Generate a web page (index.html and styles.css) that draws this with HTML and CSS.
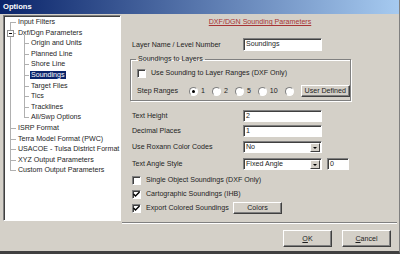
FILE: index.html
```html
<!DOCTYPE html>
<html lang="en">
<head>
    <meta charset="UTF-8">
    <title>Options</title>
    <link rel="stylesheet" href="styles.css">
</head>
<body>
<div class="window">
    <div class="titlebar">Options</div>
    <div class="main">
        <div class="tree">
            <ul class="nodes">
                <li>Input Filters</li>
                <li><span class="toggle"></span>Dxf/Dgn Parameters
                    <ul class="sub">
                        <li>Origin and Units</li>
                        <li>Planned Line</li>
                        <li>Shore Line</li>
                        <li><span class="selected">Soundings</span></li>
                        <li>Target Files</li>
                        <li>Tics</li>
                        <li>Tracklines</li>
                        <li>All/Swp Options</li>
                    </ul>
                </li>
                <li>ISRP Format</li>
                <li>Terra Model Format (PWC)</li>
                <li>USACOE - Tulsa District Format</li>
                <li>XYZ Output Parameters</li>
                <li>Custom Output Parameters</li>
            </ul>
        </div>

        <div class="panel">
            <div class="heading">DXF/DGN Sounding Parameters</div>

            <div class="field layer-row">
                <label>Layer Name / Level Number</label>
                <div class="textbox">Soundings</div>
            </div>

            <fieldset class="group">
                <legend>Soundings to Layers</legend>
                <div class="check-row first">
                    <span class="check"></span>
                    <span>Use Sounding to Layer Ranges (DXF Only)</span>
                </div>
                <div class="step-row">
                    <span class="step-label">Step Ranges</span>
                    <span class="radio on"></span><span class="opt">1</span>
                    <span class="radio"></span><span class="opt">2</span>
                    <span class="radio"></span><span class="opt">5</span>
                    <span class="radio"></span><span class="opt">10</span>
                    <span class="radio"></span>
                    <button class="btn small">User Defined</button>
                </div>
            </fieldset>

            <div class="field height-row">
                <label>Text Height</label>
                <div class="textbox">2</div>
            </div>
            <div class="field decimal-row">
                <label>Decimal Places</label>
                <div class="textbox">1</div>
            </div>
            <div class="field roxann-row">
                <label>Use Roxann Color Codes</label>
                <div class="combo"><span>No</span><span class="drop"></span></div>
            </div>
            <div class="field angle-row">
                <label>Text Angle Style</label>
                <div class="combo"><span>Fixed Angle</span><span class="drop"></span></div>
                <div class="textbox angle">0</div>
            </div>

            <div class="check-row single">
                <span class="check"></span>
                <span>Single Object Soundings (DXF Only)</span>
            </div>
            <div class="check-row">
                <span class="check">
                    <svg width="7" height="7" viewBox="0 0 7 7"><path d="M0.5 3 L2.5 5 L6.5 1" fill="none" stroke="#000" stroke-width="1.4"/></svg>
                </span>
                <span>Cartographic Soundings (IHB)</span>
            </div>
            <div class="check-row">
                <span class="check">
                    <svg width="7" height="7" viewBox="0 0 7 7"><path d="M0.5 3 L2.5 5 L6.5 1" fill="none" stroke="#000" stroke-width="1.4"/></svg>
                </span>
                <span class="export-label">Export Colored Soundings</span>
                <button class="btn small colors">Colors</button>
            </div>
        </div>
    </div>

    <div class="footer">
        <div class="separator"></div>
        <div class="buttons">
            <button class="btn"><u>O</u>K</button>
            <button class="btn"><u>C</u>ancel</button>
        </div>
    </div>
</div>
</body>
</html>
```

FILE: styles.css
```css
body {
    margin: 0;
    padding: 0;
    font-family: "Liberation Sans", Arial, sans-serif;
    font-size: 7.1px;
    color: #1e1e1e;
}

.window {
    width: 400px;
    height: 254px;
    box-sizing: border-box;
    background-color: #d4d0c8;
    border-right: 1px solid #808080;
    border-bottom: 3px solid #404040;
    display: flex;
    flex-direction: column;
}

.titlebar {
    height: 14px;
    line-height: 14px;
    padding-left: 3px;
    color: #fff;
    font-weight: bold;
    font-size: 7.6px;
    background: linear-gradient(to right, #0a246a, #a6caf0);
}

.main {
    display: flex;
    height: 208px;
}

/* tree on the left */
.tree {
    width: 118px;
    height: 206px;
    margin: 1px 0 0 3px;
    box-sizing: border-box;
    padding: 1px 0 0 1px;
    background-color: #fff;
    border: 1px solid;
    border-color: #808080 #fff #fff #808080;
    box-shadow: inset 1px 1px #404040;
}

.nodes, .sub {
    list-style: none;
    margin: 0;
    padding: 0;
    position: relative;
}

.nodes::before {
    content: '';
    position: absolute;
    left: 5px;
    top: 5px;
    bottom: 5px;
    border-left: 1px solid #b0b0b0;
}

.nodes li {
    position: relative;
    line-height: 10.6px;
    white-space: nowrap;
}

.nodes > li {
    padding-left: 13px;
}

.nodes > li::before {
    content: '';
    position: absolute;
    left: 5px;
    top: 5px;
    width: 6px;
    border-top: 1px solid #b0b0b0;
}

.sub {
    margin-left: -13px;
}

.sub::before {
    content: '';
    position: absolute;
    left: 19px;
    top: -3px;
    bottom: 5px;
    border-left: 1px solid #b0b0b0;
}

.sub li {
    padding-left: 26px;
}

.sub li::before {
    content: '';
    position: absolute;
    left: 19px;
    top: 5px;
    width: 5px;
    border-top: 1px solid #b0b0b0;
}

.toggle {
    position: absolute;
    left: 2px;
    top: 2px;
    width: 5px;
    height: 5px;
    border: 1px solid #909090;
    background-color: #fff;
    z-index: 1;
}

.toggle::after {
    content: '';
    position: absolute;
    left: 1px;
    top: 2px;
    width: 3px;
    border-top: 1px solid #000;
}

.selected {
    background-color: #0a246a;
    color: #fff;
    padding: 0 1px;
    margin-left: -1px;
}

/* right side */
.panel {
    flex: 1;
    padding-left: 11px;
    padding-right: 3px;
}

.heading {
    margin-top: 3px;
    line-height: 10px;
    text-align: center;
    color: #a83434;
    text-decoration: underline;
    padding-right: 8px;
}

.field {
    display: flex;
    align-items: center;
    height: 12px;
}

.field label {
    width: 111px;
}

.layer-row {
    margin-top: 11px;
    height: 13px;
}

.height-row {
    margin-top: 9px;
}

.decimal-row {
    margin-top: 3px;
}

.roxann-row {
    margin-top: 4px;
}

.angle-row {
    margin-top: 5px;
}

.textbox, .combo {
    width: 79px;
    height: 100%;
    box-sizing: border-box;
    background-color: #fff;
    border: 1px solid;
    border-color: #808080 #fff #fff #808080;
    box-shadow: inset 1px 1px #404040;
    padding-left: 2px;
    line-height: 11px;
}

.textbox.angle {
    width: 22px;
    margin-left: 5px;
}

.combo {
    display: flex;
    justify-content: space-between;
    padding: 1px 1px 1px 2px;
    line-height: 9px;
}

.drop {
    width: 10px;
    height: 9px;
    background-color: #d4d0c8;
    border: 1px solid;
    border-color: #fff #404040 #404040 #fff;
    box-sizing: border-box;
    position: relative;
}

.drop::after {
    content: '';
    position: absolute;
    left: 2px;
    top: 3px;
    border-left: 2px solid transparent;
    border-right: 2px solid transparent;
    border-top: 2px solid #000;
}

.group {
    margin: 3px 0 0 -2px;
    width: 218px;
    box-sizing: border-box;
    padding: 0 0 3px 6px;
    border: 1px solid #808080;
    box-shadow: inset 1px 1px #fff, 1px 1px #fff;
}

.group legend {
    padding: 0 2px;
    line-height: 10px;
    margin-left: -1px;
}

.check-row {
    display: flex;
    align-items: center;
    height: 12px;
    margin-top: 2px;
}

.group .check-row.first {
    margin-top: 3px;
}

.check-row.single {
    margin-top: 4px;
}

.check {
    width: 9px;
    height: 9px;
    box-sizing: border-box;
    margin-right: 5px;
    background-color: #fff;
    border: 1px solid;
    border-color: #808080 #fff #fff #808080;
    box-shadow: inset 1px 1px #404040;
    display: flex;
    align-items: center;
    justify-content: center;
}

.export-label {
    width: 87px;
}

.step-row {
    display: flex;
    align-items: center;
    height: 12px;
    margin-top: 6px;
}

.step-label {
    width: 52px;
}

.radio {
    width: 9px;
    height: 9px;
    box-sizing: border-box;
    border-radius: 50%;
    background-color: #fff;
    border: 1px solid;
    border-color: #808080 #fff #fff #808080;
    margin-right: 3px;
    position: relative;
}

.radio.on::after {
    content: '';
    position: absolute;
    left: 2px;
    top: 2px;
    width: 3px;
    height: 3px;
    border-radius: 50%;
    background-color: #000;
}

.opt {
    margin-right: 7px;
}

.btn {
    font-family: "Liberation Sans", Arial, sans-serif;
    font-size: 7.1px;
    color: #1e1e1e;
    background-color: #d4d0c8;
    border: 1px solid;
    border-color: #fff #404040 #404040 #fff;
    box-shadow: inset -1px -1px #808080;
    padding: 0;
    width: 49px;
    height: 17px;
}

.btn.small {
    height: 12px;
    line-height: 9px;
}

.step-row .btn.small {
    margin-left: 4px;
}

.footer {
    padding-left: 122px;
    padding-right: 2px;
}

.separator {
    border-top: 1px solid #808080;
    border-bottom: 1px solid #fff;
}

.buttons {
    display: flex;
    justify-content: flex-end;
    gap: 10px;
    margin-top: 6px;
    padding-right: 6px;
}
```
